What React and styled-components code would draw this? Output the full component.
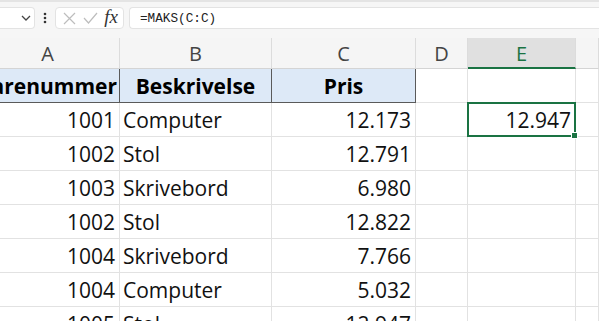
import React from 'react';
import styled, {createGlobalStyle, css} from 'styled-components';

const GlobalStyle = createGlobalStyle`
  html, body {
    margin: 0;
    padding: 0;
    background: #fff;
  }
  body {
    font-family: "Open Sans", "Liberation Sans", sans-serif;
  }
`;

const COLS = '144px 152px 144px 52px 108px 1fr';
const GREEN = '#1a7343';

const Window = styled.div`
  width: 599px;
  height: 321px;
  overflow: hidden;
  background: #fff;
`;

const Toolbar = styled.div`
  display: flex;
  align-items: center;
  padding-top: 3px;
  border-top: 2px solid #e4e4e4;
  box-sizing: border-box;
  height: 31px;
  background: #f6f6f6;
`;

const Box = styled.div`
  display: flex;
  align-items: center;
  height: 22px;
  background: #fff;
  border: 1px solid #e3e3e3;
  border-radius: 4px;
  box-sizing: border-box;
`;

const NameBox = styled(Box)`
  width: 35px;
  border-left: none;
  border-radius: 0 4px 4px 0;
  justify-content: flex-end;
  padding-right: 3px;
`;

const Dots = styled.div`
  width: 20px;
  display: flex;
  justify-content: center;
`;

const FxBox = styled(Box)`
  width: 69px;
  padding: 0 5px 0 7px;
  justify-content: space-between;
`;

const Fx = styled.span`
  font-family: "Liberation Serif", "DejaVu Serif", serif;
  font-style: italic;
  font-size: 19px;
  color: #333;
  line-height: 1;
  margin-top: -3px;
`;

const FormulaInput = styled(Box)`
  flex: 1;
  margin-left: 5px;
  border-right: none;
  border-radius: 4px 0 0 4px;
  padding-left: 10px;
  font-family: "Liberation Mono", "DejaVu Sans Mono", monospace;
  font-size: 12.7px;
  color: #222;
`;

const Gap = styled.div`
  height: 7px;
  background: #f6f6f6;
`;

// the sheet is scrolled a little to the right, so column A starts off-screen
const Sheet = styled.div`
  margin-left: -24px;
`;

const Row = styled.div`
  display: grid;
  grid-template-columns: ${COLS};
  height: ${p => p.$h || 34}px;
`;

const ColHead = styled.div`
  display: flex;
  align-items: center;
  justify-content: center;
  box-sizing: border-box;
  background: ${p => (p.$active ? '#e0e0e0' : '#f5f5f5')};
  border-right: 1px solid #dcdcdc;
  border-bottom: ${p => (p.$active ? `2px solid ${GREEN}` : '1px solid #d4d4d4')};
  color: ${p => (p.$active ? GREEN : '#444')};
  font-size: 20px;
  padding-top: 1px;
`;

const Cell = styled.div`
  position: relative;
  display: flex;
  align-items: center;
  box-sizing: border-box;
  border-right: 1px solid #e2e2e2;
  border-bottom: 1px solid #e2e2e2;
  font-size: 21px;
  color: #111;
  white-space: nowrap;
  padding: 0 3px 0 3px;
  justify-content: ${p => (p.$align === 'right' ? 'flex-end' : p.$align === 'center' ? 'center' : 'flex-start')};
  ${p => p.$align === 'right' && css`padding-right: 4px;`}

  ${p => p.$head && css`
    background: #dde9f7;
    border-right: 1px solid #5a5a5a;
    border-bottom: 1px solid #5a5a5a;
    font-weight: 700;
    color: #000;
  `}

  ${p => p.$selected && css`
    &::after {
      content: '';
      position: absolute;
      left: -1px;
      top: -1px;
      right: -1px;
      bottom: -1px;
      border: 2px solid ${GREEN};
    }
    &::before {
      content: '';
      position: absolute;
      right: -3px;
      bottom: -3px;
      width: 5px;
      height: 5px;
      background: ${GREEN};
      border: 1px solid #fff;
      z-index: 2;
    }
  `}
`;

const Chevron = () => (
  <svg width="10" height="6" viewBox="0 0 10 6">
    <path d="M1 1l4 4 4-4" fill="none" stroke="#444" strokeWidth="1.3" />
  </svg>
);

const VDots = () => (
  <svg width="4" height="12" viewBox="0 0 4 12">
    <circle cx="2" cy="2" r="1.3" fill="#333" />
    <circle cx="2" cy="6" r="1.3" fill="#333" />
    <circle cx="2" cy="10" r="1.3" fill="#333" />
  </svg>
);

const Cross = () => (
  <svg width="13" height="13" viewBox="0 0 13 13">
    <path d="M1 1l11 11M12 1L1 12" stroke="#bdbdbd" strokeWidth="1.2" />
  </svg>
);

const Check = () => (
  <svg width="15" height="12" viewBox="0 0 15 12">
    <path d="M1 6l4.5 5L14 1" fill="none" stroke="#bdbdbd" strokeWidth="1.2" />
  </svg>
);

const rows = [
  ['1001', 'Computer', '12.173', '12.947'],
  ['1002', 'Stol', '12.791'],
  ['1003', 'Skrivebord', '6.980'],
  ['1002', 'Stol', '12.822'],
  ['1004', 'Skrivebord', '7.766'],
  ['1004', 'Computer', '5.032'],
  ['1005', 'Stol', '12.947'],
];

export default function App() {
  return (
    <Window>
      <GlobalStyle/>
      <Toolbar>
        <NameBox><Chevron/></NameBox>
        <Dots><VDots/></Dots>
        <FxBox>
          <Cross/>
          <Check/>
          <Fx>fx</Fx>
        </FxBox>
        <FormulaInput>=MAKS(C:C)</FormulaInput>
      </Toolbar>
      <Gap/>
      <Sheet>
        <Row $h={31}>
          {['A', 'B', 'C', 'D', 'E', ''].map(l => (
            <ColHead key={l} $active={l === 'E'}>{l}</ColHead>
          ))}
        </Row>
        <Row>
          <Cell $head $align="center">Varenummer</Cell>
          <Cell $head $align="center">Beskrivelse</Cell>
          <Cell $head $align="center">Pris</Cell>
          <Cell/>
          <Cell/>
          <Cell/>
        </Row>
        {rows.map((r, i) => (
          <Row key={i}>
            <Cell $align="right">{r[0]}</Cell>
            <Cell>{r[1]}</Cell>
            <Cell $align="right">{r[2]}</Cell>
            <Cell/>
            <Cell $align="right" $selected={!!r[3]}>{r[3]}</Cell>
            <Cell/>
          </Row>
        ))}
      </Sheet>
    </Window>
  );
}
